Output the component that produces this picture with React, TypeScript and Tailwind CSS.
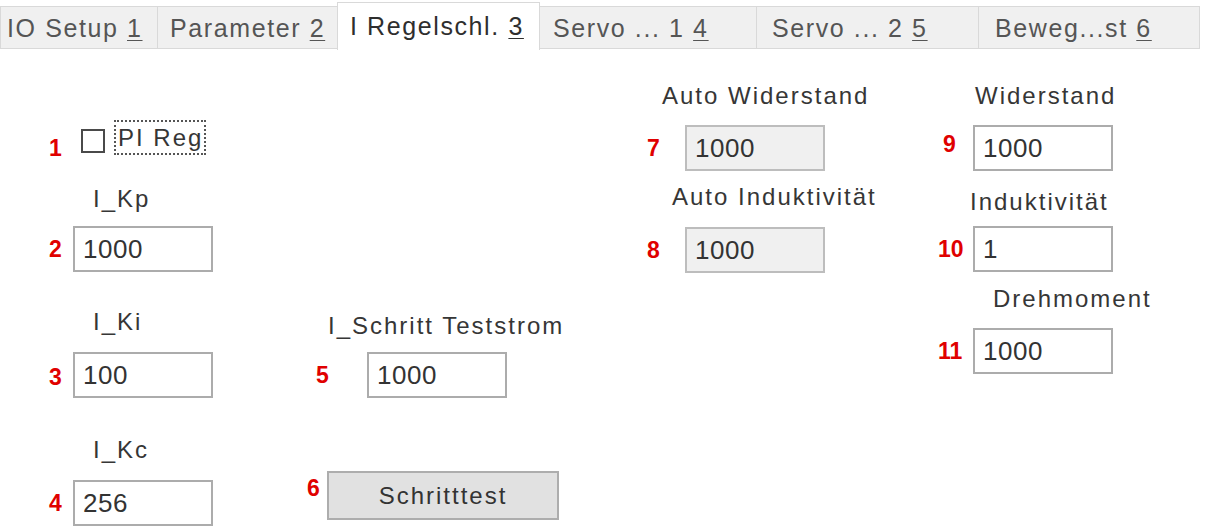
import React from "react";

const label =
  "text-[24px] leading-[30px] tracking-[2px] text-[#363636] whitespace-nowrap";
const red =
  "text-[23px] leading-none font-bold text-[#e00000] whitespace-nowrap";

function Box({ value, readOnly }: { value: string; readOnly?: boolean }) {
  return (
    <input
      readOnly
      defaultValue={value}
      className={
        "h-[46px] w-[140px] shrink-0 border-2 px-[8px] text-[26px] tracking-[0.5px] text-[#333] outline-none " +
        (readOnly
          ? "bg-[#f0f0f0] border-[#bdbdbd]"
          : "bg-white border-[#acacac]")
      }
    />
  );
}

function Tab({
  text,
  hot,
  active,
  className,
}: {
  text: string;
  hot: string;
  active?: boolean;
  className: string;
}) {
  return (
    <div
      className={
        "flex items-center whitespace-nowrap border border-[#d9d9d9] text-[25px] leading-none tracking-[1.6px] " +
        (active
          ? "mt-[2px] h-[48px] border-b-0 bg-white text-[#2e2e2e] "
          : "mt-[6px] h-[43px] bg-[#f0f0f0] pt-[1px] text-[#555] ") +
        className
      }
    >
      <span>
        {text}
        <span className="underline decoration-1 underline-offset-[3px]">
          {hot}
        </span>
      </span>
    </div>
  );
}

export default function App() {
  return (
    <div className="h-[526px] w-[1206px] overflow-hidden bg-white font-['Liberation_Sans',Arial,sans-serif]">
      {/* tab strip */}
      <div className="flex h-[50px] items-start">
        <Tab text="IO Setup " hot="1" className="w-[158px] pl-[6px]" />
        <Tab text="Parameter " hot="2" className="-ml-px w-[181px] pl-[12px]" />
        <Tab text="I Regelschl. " hot="3" active className="-ml-px w-[203px] pl-[12px]" />
        <Tab text="Servo ... 1 " hot="4" className="-ml-px w-[218px] pl-[13px]" />
        <Tab text="Servo ... 2 " hot="5" className="-ml-px w-[223px] pl-[15px]" />
        <Tab text="Beweg...st " hot="6" className="-ml-px w-[222px] pl-[16px]" />
      </div>

      <div className="flex">
        {/* regler */}
        <div className="w-[300px] shrink-0">
          <div className="mt-[70px] flex h-[35px] items-start">
            <span className={red + " ml-[49px] mt-[17px] w-[32px]"}>1</span>
            <span className="mt-[9px] h-[24px] w-[24px] shrink-0 border-2 border-[#4a4a4a] bg-white" />
            <span className={label + " ml-[9px] h-[35px] border-2 border-dotted border-[#555] pl-[2px] pr-[1px] leading-[31px] text-[#333]"}>
              PI Reg
            </span>
          </div>

          <div className={label + " ml-[93px] mt-[29px]"}>I_Kp</div>
          <div className="mt-[12px] flex h-[46px] items-center">
            <span className={red + " ml-[49px] w-[24px]"}>2</span>
            <Box value="1000" />
          </div>

          <div className={label + " ml-[93px] mt-[35px]"}>I_Ki</div>
          <div className="mt-[15px] flex h-[46px] items-center">
            <span className={red + " ml-[49px] w-[24px] mt-[5px]"}>3</span>
            <Box value="100" />
          </div>

          <div className={label + " ml-[93px] mt-[37px]"}>I_Kc</div>
          <div className="mt-[15px] flex h-[46px] items-center">
            <span className={red + " ml-[49px] w-[24px]"}>4</span>
            <Box value="256" />
          </div>
        </div>

        {/* schritttest */}
        <div className="w-[300px] shrink-0">
          <div className={label + " ml-[28px] mt-[261px]"}>I_Schritt Teststrom</div>
          <div className="mt-[11px] flex h-[46px] items-center">
            <span className={red + " ml-[16px] w-[51px]"}>5</span>
            <Box value="1000" />
          </div>
          <div className="mt-[73px] flex h-[49px] items-start">
            <span className={red + " ml-[7px] mt-[6px] w-[20px]"}>6</span>
            <button className="h-[49px] w-[232px] border-2 border-[#adadad] bg-[#e1e1e1] text-[24px] tracking-[2px] text-[#333]">
              Schritttest
            </button>
          </div>
        </div>

        {/* automatisch ermittelt */}
        <div className="w-[330px] shrink-0">
          <div className={label + " ml-[62px] mt-[31px]"}>Auto Widerstand</div>
          <div className="mt-[14px] flex h-[46px] items-center">
            <span className={red + " ml-[47px] w-[38px]"}>7</span>
            <Box value="1000" readOnly />
          </div>
          <div className={label + " ml-[72px] mt-[11px]"}>Auto Induktivität</div>
          <div className="mt-[15px] flex h-[46px] items-center">
            <span className={red + " ml-[47px] w-[38px]"}>8</span>
            <Box value="1000" readOnly />
          </div>
        </div>

        {/* motordaten */}
        <div className="w-[276px] shrink-0">
          <div className={label + " ml-[45px] mt-[31px]"}>Widerstand</div>
          <div className="mt-[14px] flex h-[46px] items-center">
            <span className={red + " ml-[13px] mb-[8px] w-[30px]"}>9</span>
            <Box value="1000" />
          </div>
          <div className={label + " ml-[40px] mt-[16px]"}>Induktivität</div>
          <div className="mt-[9px] flex h-[46px] items-center">
            <span className={red + " ml-[8px] w-[35px]"}>10</span>
            <Box value="1" />
          </div>
          <div className={label + " ml-[63px] mt-[12px]"}>Drehmoment</div>
          <div className="mt-[14px] flex h-[46px] items-center">
            <span className={red + " ml-[8px] w-[35px]"}>11</span>
            <Box value="1000" />
          </div>
        </div>
      </div>
    </div>
  );
}
